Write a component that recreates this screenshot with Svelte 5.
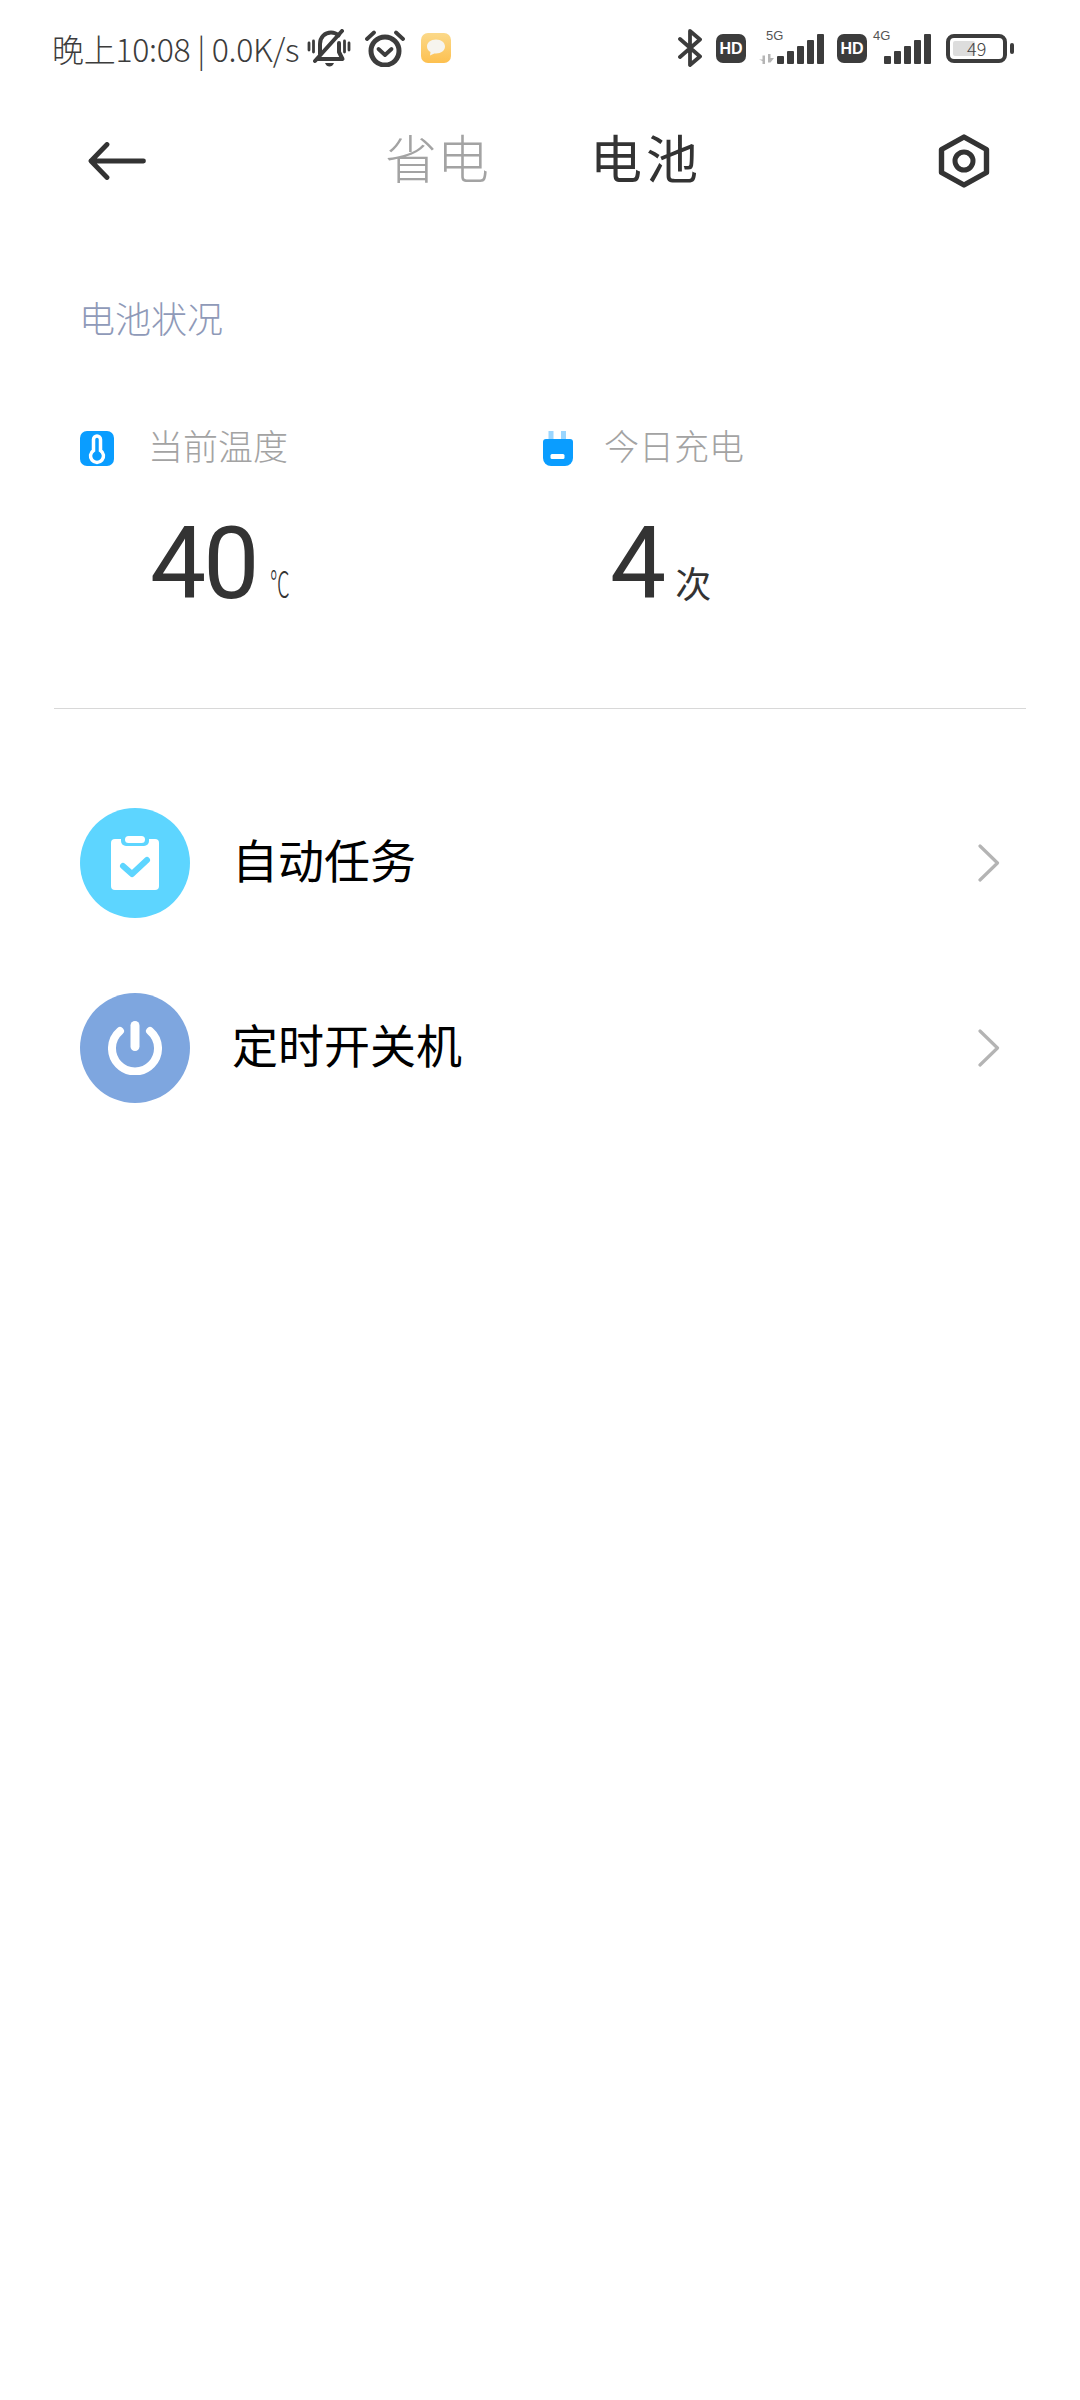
<script>
  const bars = [
    { x: 0, h: 8 },
    { x: 10, h: 13 },
    { x: 20, h: 18 },
    { x: 30, h: 24 },
    { x: 40, h: 30 }
  ];
</script>

{#snippet signal(label, showArrows)}
  <div class="signal" class:wide={showArrows}>
    <span class="net">{label}</span>
    {#if showArrows}
      <svg class="arrows" viewBox="0 0 17 10" width="17" height="10" aria-hidden="true">
        <path d="M1 5.500 4.500 5.500 4.500 1.500 7 1.500 7 10 4.500 10 4.500 7 Z M10 0 12.500 0 12.500 4 16 4 12.500 8.500 10 8.500 Z" fill="#b5b5b5" />
      </svg>
    {/if}
    <svg class="bars" viewBox="0 0 48 30" width="48" height="30" aria-hidden="true">
      {#each bars as b}
        <rect x={b.x} y={30 - b.h} width="7" height={b.h} rx="1" fill="#3c3c3c" />
      {/each}
    </svg>
  </div>
{/snippet}

{#snippet hd()}
  <div class="hd">HD</div>
{/snippet}

{#snippet chevron()}
  <svg class="chev" viewBox="0 0 22 38" width="22" height="38" aria-hidden="true">
    <path d="M2 2 19.500 19 2 36" fill="none" stroke="#b4b4b4" stroke-width="3.200" stroke-linecap="round" stroke-linejoin="round" />
  </svg>
{/snippet}

<div class="page">
  <header class="status">
    <div class="s-left">
      <span class="s-text">晚上10:08 | 0.0K/s</span>
      <svg class="i-bell" viewBox="0 0 44 38" width="44" height="38" aria-hidden="true">
        <g fill="none" stroke="#3c3c3c" stroke-width="4" stroke-linecap="round" stroke-linejoin="round">
          <path d="M13 25V15C13 8 18 3.500 24 3.500c3 0 5.500 1 7.500 3" />
          <path d="M32 14V23l3.500 7H10.500" />
          <path d="M8 32 35 2" />
          <path d="M2 14v7M6.500 12v11M37.500 12v11M42 14v7" stroke-width="2.800" />
        </g>
        <path d="M18 34h9c-1 2.500-2.500 3.500-4.500 3.500S19 36.500 18 34Z" fill="#3c3c3c" />
      </svg>
      <svg class="i-alarm" viewBox="0 0 40 37" width="40" height="37" aria-hidden="true">
        <circle cx="20" cy="21" r="14" fill="none" stroke="#3c3c3c" stroke-width="5" />
        <path d="M13.500 19 20 25 26.500 19" fill="none" stroke="#3c3c3c" stroke-width="3.800" stroke-linecap="round" stroke-linejoin="round" />
        <path d="M2 9 9 2.500M38 9 31 2.500" fill="none" stroke="#3c3c3c" stroke-width="3.800" stroke-linecap="round" />
      </svg>
      <svg class="i-msg" viewBox="0 0 30 30" width="30" height="30" aria-hidden="true">
        <defs>
          <linearGradient id="msg" x1="0" y1="0" x2="0" y2="1">
            <stop offset="0" stop-color="#fbd98a" />
            <stop offset="1" stop-color="#fdc04f" />
          </linearGradient>
        </defs>
        <rect width="30" height="30" rx="7" fill="url(#msg)" />
        <path d="M15 6.500c-5.200 0-9 3-9 7 0 2.400 1.300 4.300 3.500 5.500L9 22.500l4.300-2c.6.100 1.100.100 1.700.100 5.200 0 9-3 9-7s-3.800-7.100-9-7.100Z" fill="#f6f4ee" />
      </svg>
    </div>
    <div class="s-right">
      <svg class="i-bt" viewBox="0 0 24 38" width="24" height="38" aria-hidden="true">
        <path d="M2 10 22 27.500 12 36V2L22 10.500 2 28" fill="none" stroke="#3c3c3c" stroke-width="3.800" stroke-linecap="round" stroke-linejoin="round" />
      </svg>
      {@render hd()}
      {@render signal('5G', true)}
      {@render hd()}
      {@render signal('4G', false)}
      <div class="battery">
        <div class="batt-body">
          <div class="batt-fill"></div>
          <span class="batt-num">49</span>
        </div>
        <div class="batt-nub"></div>
      </div>
    </div>
  </header>

  <nav class="bar">
    <svg class="back" viewBox="0 0 58 38" width="58" height="38" aria-hidden="true">
      <path d="M55.500 19H3M19 2.500 3 19 19 35.500" fill="none" stroke="#333" stroke-width="4.800" stroke-linecap="round" stroke-linejoin="round" />
    </svg>
    <div class="tabs">
      <span class="tab off">省电</span>
      <span class="tab on">电池</span>
    </div>
    <svg class="gear" viewBox="0 0 52 54" width="52" height="54" aria-hidden="true">
      <path d="M26 3 48.500 15.500V38.500L26 51 3.500 38.500V15.500Z" fill="none" stroke="#333" stroke-width="5.400" stroke-linejoin="round" />
      <circle cx="26" cy="27" r="9" fill="none" stroke="#333" stroke-width="5" />
    </svg>
  </nav>

  <h2 class="section">电池状况</h2>

  <section class="stats">
    <div class="stat">
      <div class="stat-head">
        <svg class="stat-icon" viewBox="0 0 34 35" width="34" height="35" aria-hidden="true">
          <rect width="34" height="35" rx="7" fill="#0a9dff" />
          <path d="M13.500 19.500V8.500a3.500 3.500 0 0 1 7 0v11a6.500 6.500 0 1 1-7 0Z" fill="none" stroke="#fff" stroke-width="3.500" />
        </svg>
        <span class="stat-label">当前温度</span>
      </div>
      <div class="stat-val"><span class="num">40</span><span class="unit temp">℃</span></div>
    </div>
    <div class="stat second">
      <div class="stat-head">
        <svg class="stat-icon" viewBox="0 0 30 35" width="30" height="35" aria-hidden="true">
          <path d="M5.500 0h5v9h-5ZM18 0h5v9h-5Z" fill="#9ad6ff" />
          <path d="M0 11a3 3 0 0 1 3-3h24a3 3 0 0 1 3 3v16a8 8 0 0 1-8 8H8a8 8 0 0 1-8-8Z" fill="#0a9dff" />
          <rect x="7.500" y="23" width="14" height="5" rx="1.500" fill="#fff" />
        </svg>
        <span class="stat-label">今日充电</span>
      </div>
      <div class="stat-val"><span class="num">4</span><span class="unit">次</span></div>
    </div>
  </section>

  <div class="divider"></div>

  <ul class="rows">
    <li class="row">
      <div class="circle task">
        <svg viewBox="0 0 48 54" width="48" height="54" aria-hidden="true">
          <rect x="0" y="3" width="48" height="51" rx="4" fill="#fff" />
          <rect x="10" y="-3" width="28" height="13" rx="5" fill="#5dd5ff" />
          <rect x="14" y="0" width="20" height="7" rx="3.500" fill="#fff" />
          <path d="M12 30 21 38 36 24" fill="none" stroke="#5dd5ff" stroke-width="6" stroke-linecap="round" stroke-linejoin="round" />
        </svg>
      </div>
      <span class="row-text">自动任务</span>
      {@render chevron()}
    </li>
    <li class="row">
      <div class="circle power">
        <svg viewBox="0 0 54 54" width="54" height="54" aria-hidden="true">
          <path d="M12 10A23 23 0 1 0 42 10" fill="none" stroke="#fff" stroke-width="8" stroke-linecap="round" />
          <rect x="22.500" y="0" width="9" height="30" rx="4.500" fill="#fff" />
        </svg>
      </div>
      <span class="row-text">定时开关机</span>
      {@render chevron()}
    </li>
  </ul>
</div>

<style>
  :global(body) {
    margin: 0;
    background: #fff;
  }
  .page {
    width: 1080px;
    height: 2400px;
    background: #fff;
    color: #333;
    font-family: "Noto Sans CJK SC", "Noto Sans", sans-serif;
    overflow: hidden;
  }
  .status {
    height: 96px;
    display: flex;
    align-items: center;
    justify-content: space-between;
    padding: 0 66px 0 52px;
    box-sizing: border-box;
  }
  .s-left,
  .s-right {
    display: flex;
    align-items: center;
  }
  .s-text {
    font-size: 32px;
    font-weight: 300;
    color: #3c3c3c;
    white-space: nowrap;
    width: 255px;
    letter-spacing: -0.3px;
  }
  .i-alarm {
    margin-left: 14px;
  }
  .i-msg {
    margin-left: 16px;
  }
  .i-bt {
    margin-right: 14px;
  }
  .hd {
    width: 30px;
    height: 29px;
    border-radius: 7px;
    background: #3c3c3c;
    color: #fff;
    font: 700 16px/29px "Liberation Sans", sans-serif;
    text-align: center;
  }
  .signal {
    position: relative;
    width: 65px;
    height: 38px;
  }
  .signal.wide {
    width: 79px;
    margin-right: 12px;
  }
  .net {
    position: absolute;
    left: 6px;
    top: 0;
    font: 400 13px/14px "Liberation Sans", sans-serif;
    color: #555;
  }
  .signal.wide .net {
    left: 20px;
  }
  .arrows {
    position: absolute;
    left: 12px;
    bottom: 3px;
  }
  .bars {
    position: absolute;
    right: 0;
    bottom: 3px;
  }
  .battery {
    display: flex;
    align-items: center;
    margin-left: 14px;
    gap: 3px;
  }
  .batt-body {
    position: relative;
    width: 61px;
    height: 29px;
    box-sizing: border-box;
    border: 4px solid #3c3c3c;
    border-radius: 8px;
  }
  .batt-fill {
    position: absolute;
    left: 3px;
    top: 3px;
    bottom: 3px;
    width: 22px;
    background: #ddd;
    border-radius: 2px;
  }
  .batt-num {
    position: absolute;
    left: 17px;
    top: 0;
    font-size: 18px;
    font-weight: 300;
    line-height: 21px;
    color: #444;
  }
  .batt-nub {
    width: 4px;
    height: 11px;
    border-radius: 2px;
    background: #3c3c3c;
  }
  .bar {
    height: 130px;
    display: flex;
    align-items: center;
    padding: 0 90px 0 88px;
  }
  .tabs {
    display: flex;
    gap: 101px;
    margin-left: 239px;
    padding-bottom: 8px;
  }
  .tab {
    font-size: 52px;
    font-weight: 300;
    line-height: 60px;
  }
  .tab.off {
    color: #a3a3a3;
  }
  .tab.on {
    color: #333;
    font-weight: 400;
    letter-spacing: 4px;
  }
  .gear {
    margin-left: auto;
  }
  .section {
    margin: 71px 0 0 79px;
    font-size: 36px;
    font-weight: 300;
    line-height: 40px;
    color: #8f9ab8;
  }
  .stats {
    display: grid;
    grid-template-columns: 463px 1fr;
    padding-left: 80px;
    margin-top: 94px;
  }
  .stat-head {
    display: flex;
    align-items: center;
    height: 35px;
    gap: 34px;
  }
  .second .stat-head {
    gap: 31px;
  }
  .stat-label {
    font-size: 35px;
    font-weight: 300;
    color: #a3a3a3;
    line-height: 35px;
    padding-bottom: 8px;
  }
  .stat-val {
    display: flex;
    align-items: baseline;
    margin-top: 48px;
    margin-left: 70px;
    height: 100px;
  }
  .second .stat-val {
    margin-left: 67px;
  }
  .num {
    font-family: Roboto, sans-serif;
    font-size: 100px;
    line-height: 100px;
    color: #333;
    letter-spacing: -3px;
  }
  .unit {
    margin-left: 12px;
    font-size: 36px;
    font-weight: 400;
    color: #333;
  }
  .unit.temp {
    font-weight: 300;
    margin-left: 14px;
    transform: scaleX(0.55);
    transform-origin: left center;
  }
  .divider {
    height: 1px;
    margin: 94px 54px 0;
    background: #d8d8d8;
  }
  .rows {
    list-style: none;
    margin: 61px 0 0;
    padding: 0 80px;
  }
  .row {
    height: 185px;
    display: flex;
    align-items: center;
    gap: 42px;
  }
  .circle {
    width: 110px;
    height: 110px;
    border-radius: 50%;
    display: flex;
    align-items: center;
    justify-content: center;
  }
  .task {
    background: #5dd5ff;
  }
  .power {
    background: #7ea6df;
  }
  .row-text {
    font-size: 46px;
    font-weight: 400;
    color: #000;
    line-height: 60px;
    padding-bottom: 10px;
  }
  .chev {
    margin-left: auto;
  }
</style>
